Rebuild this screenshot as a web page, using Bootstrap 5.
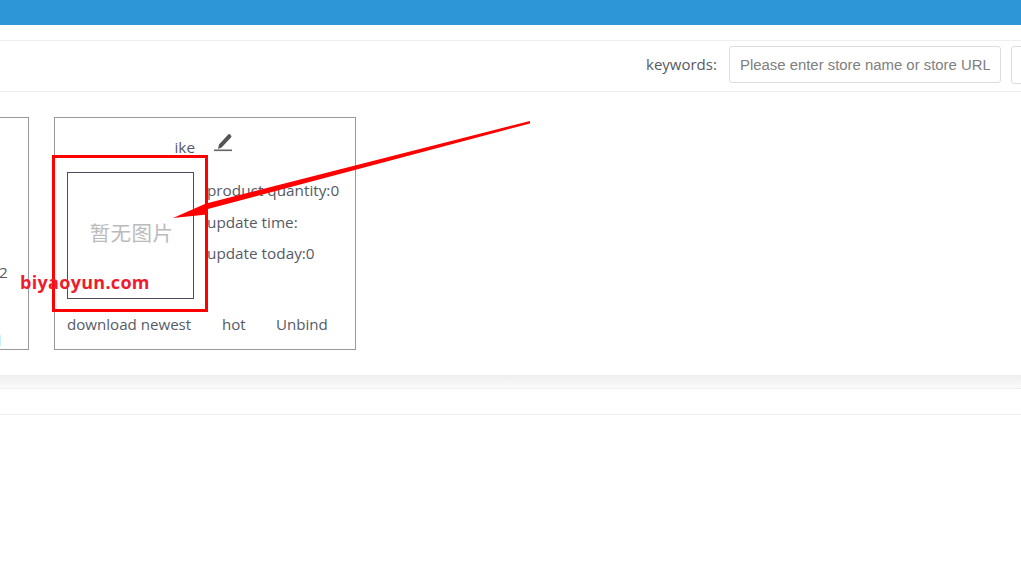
<!DOCTYPE html>
<html lang="en">
<head>
    <meta charset="UTF-8">
    <title>Store list</title>
    <link href="https://cdn.jsdelivr.net/npm/bootstrap@5.3.3/dist/css/bootstrap.min.css" rel="stylesheet">
    <style>
        body { font-family: "Open Sans", "Noto Sans CJK SC", sans-serif; font-size: 15.3px; color: #565a66; background: #fff; overflow: hidden; height: 579px; position: relative; }
        .top-strip { height: 25px; background: #2d96d6; }
        .filter-row { margin-top: 15px; height: 52px; border-top: 1px solid #eee; border-bottom: 1px solid #eee; padding: 0 0 3px 646px; }
        .filter-label { width: 83px; font-size: 15px; white-space: nowrap; flex-shrink: 0; }
        .filter-input { width: 272px; height: 37px; border: 1px solid #ddd; border-radius: 3px; padding: 0 10px; font-family: "Liberation Sans", sans-serif; font-size: 14.9px; color: #777; flex-shrink: 0; }
        .filter-input::placeholder { color: #808080; opacity: 1; }
        .filter-next { width: 40px; height: 38px; margin-left: 10px; border: 1px solid #ddd; border-radius: 3px; flex-shrink: 0; }
        .store-row { margin: 25px 0 0 -273px; gap: 25px; }
        .store-box { width: 302px; height: 233px; border: 1px solid #999; flex-shrink: 0; padding: 0 12px; }
        .store-title { height: 54px; padding-left: 89px; padding-top: 13px; }
        .store-title span { margin-top: 5px; width: 39px; }
        .store-title svg { margin-left: 18px; }
        .no-pic { width: 127px; height: 127px; border: 1px solid #4a4d5e; padding: 0 0 7px 2px; color: #bbb; font-family: "Noto Sans CJK SC", serif; font-size: 20.5px; letter-spacing: .4px; flex-shrink: 0; }
        .store-stats { margin-left: 13px; padding-top: 3px; white-space: nowrap; }
        .store-stats div { height: 31.5px; line-height: 31.5px; }
        .store-links { margin-top: 14px; font-size: 15.1px; white-space: nowrap; }
        .store-links a { color: inherit; text-decoration: none; }
        .left-val { position: absolute; left: -1px; top: 261px; }
        .left-mark { position: absolute; left: 0; top: 335px; width: 1px; height: 11px; background: #c8f2fb; }
        .shade-band { margin-top: 25px; height: 13px; background: linear-gradient(#eeeeee, #fafafa); border-bottom: 1px solid #eee; box-sizing: content-box; }
        .empty-row { height: 26px; border-bottom: 1px solid #eee; }
        .mark-box { position: absolute; left: 52px; top: 155px; width: 156px; height: 157px; border: 3px solid #f00; }
        .mark-arrow { position: absolute; left: 0; top: 0; }
        .mark-text { position: absolute; left: 20px; top: 270px; font-family: "Open Sans", sans-serif; font-weight: 700; font-size: 18px; line-height: 24px; color: #ee1c2e; letter-spacing: .3px; }
    </style>
</head>
<body>
    <div class="top-strip"></div>

    <div class="filter-row d-flex align-items-center">
        <label class="filter-label">keywords:</label>
        <input type="text" class="filter-input" placeholder="Please enter store name or store URL">
        <div class="filter-next"></div>
    </div>

    <div class="store-row d-flex">
        <div class="store-box"></div>
        <div class="store-box">
            <div class="store-title d-flex">
                <span class="text-end">ike</span>
                <svg width="22" height="22" viewBox="0 0 22 22">
                    <path d="M6 13.500 15.200 3.600a1.400 1.400 0 0 1 2 0l.8.8a1.400 1.400 0 0 1 0 2L8.600 16.400 5 18z" fill="#555"/>
                    <rect x="1" y="18.500" width="18" height="1.600" fill="#666"/>
                </svg>
            </div>
            <div class="d-flex">
                <div class="no-pic d-flex align-items-center justify-content-center">暂无图片</div>
                <div class="store-stats">
                    <div>product quantity:0</div>
                    <div>update time:</div>
                    <div>update today:0</div>
                </div>
            </div>
            <div class="store-links d-flex">
                <a href="#" style="width:155px">download newest</a>
                <a href="#" style="width:54px">hot</a>
                <a href="#">Unbind</a>
            </div>
        </div>
    </div>
    <span class="left-val">2</span>
    <span class="left-mark"></span>

    <div class="shade-band"></div>
    <div class="empty-row"></div>

    <!-- annotations over the page -->
    <div class="mark-box"></div>
    <svg class="mark-arrow" width="1021" height="579">
        <path d="M530 121 206 203.500 173 218 207 214.500 206 209.500 530 123.500z" fill="#f00"/>
    </svg>
    <div class="mark-text">biyaoyun.com</div>
</body>
</html>
